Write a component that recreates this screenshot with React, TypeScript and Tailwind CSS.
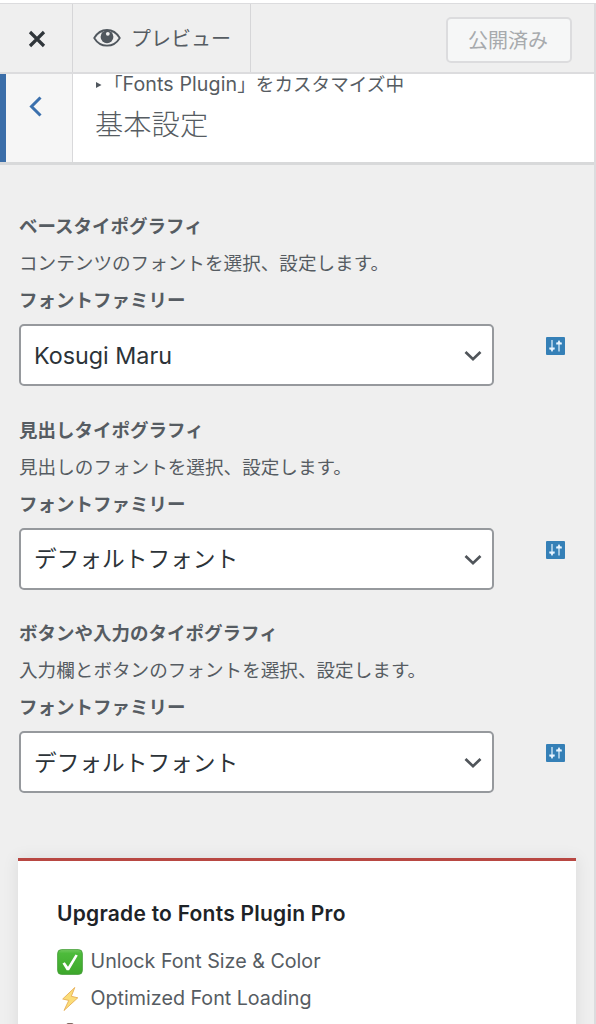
import type { ReactNode } from 'react';

type TypographyControl = {
  title: string;
  description: string;
  value: string;
  latin?: boolean;
};

const controls: TypographyControl[] = [
  {
    title: 'ベースタイポグラフィ',
    description: 'コンテンツのフォントを選択、設定します。',
    value: 'Kosugi Maru',
    latin: true,
  },
  {
    title: '見出しタイポグラフィ',
    description: '見出しのフォントを選択、設定します。',
    value: 'デフォルトフォント',
  },
  {
    title: 'ボタンや入力のタイポグラフィ',
    description: '入力欄とボタンのフォントを選択、設定します。',
    value: 'デフォルトフォント',
  },
];

function EyeIcon() {
  return (
    <svg width="28" height="20" viewBox="0 0 28 20" fill="none">
      <path d="M1.200 10C4.200 5 8.600 2 14 2s9.800 3 12.800 8c-3 5-7.400 7.700-12.800 7.700S4.200 15 1.200 10Z" stroke="#50575e" strokeWidth="1.800" strokeLinejoin="round" />
      <circle cx="14" cy="8.800" r="6.400" fill="#50575e" />
      <circle cx="14.800" cy="5.800" r="1.900" fill="#efefef" />
    </svg>
  );
}

function SlidersIcon() {
  return (
    <svg width="19" height="18" viewBox="0 0 19 18" fill="none" className="block">
      <rect width="19" height="18" rx="1" fill="#3580b7" />
      <path d="M6 3v11.500M13 3.500V14.500" stroke="#d8eaf7" strokeWidth="1.300" />
      <path d="M3.300 11.500h5.400M10.200 6.500h5.600" stroke="#e8f4ff" strokeWidth="1.900" />
      <path d="M4.300 12h3.400L6 14.600ZM11.300 6h3.400L13 3.400Z" fill="#e8f4ff" />
    </svg>
  );
}

function CheckIcon() {
  return (
    <svg width="26" height="26" viewBox="0 0 26 26" fill="none">
      <defs>
        <linearGradient id="check-fill" x1="0" y1="0" x2="0" y2="1">
          <stop offset="0" stopColor="#72ca60" />
          <stop offset="0.150" stopColor="#4dbb3b" />
          <stop offset="1" stopColor="#3da72b" />
        </linearGradient>
      </defs>
      <rect x="0.600" y="0.600" width="24.800" height="24.800" rx="4" fill="url(#check-fill)" stroke="#439b37" strokeWidth="0.800" />
      <path d="m5.500 14.500 2.300-1.300 3.200 4.500L18.500 5.500l2.300 1.100-8.700 14.600h-2.400Z" fill="#fff" />
    </svg>
  );
}

function BoltIcon() {
  return (
    <svg width="26" height="26" viewBox="0 0 26 26" fill="none">
      <path d="M17.800 1.500 5.700 13l6.100 1.400L7 24.500 20.800 11.800l-6.500-1.500Z" fill="#fbdd78" stroke="#e6ae55" strokeWidth="0.900" strokeLinejoin="round" />
    </svg>
  );
}

// Only the tip of this row shows above the fold
function BrushIcon() {
  return (
    <svg width="26" height="26" viewBox="0 0 26 26" fill="none">
      <path d="M8 4c1-6 9-6 10 0l1 8H7Z" fill="#806a62" />
    </svg>
  );
}

function FeatureRow({ icon, children }: { icon: ReactNode; children?: ReactNode }) {
  return (
    <li className="flex h-[37px] items-center gap-[7.5px]">
      {icon}
      <span>{children}</span>
    </li>
  );
}

function FontControl({ title, description, value, latin }: TypographyControl) {
  return (
    <section className="h-[203.5px]">
      <h3 className="text-[18.5px] leading-[37px] font-bold">{title}</h3>
      <p className="text-[18.6px] leading-[37px]">{description}</p>
      <p className="text-[18.5px] leading-[37px] font-bold">フォントファミリー</p>
      <div className="mt-[5px] flex items-start">
        <button className="flex h-[62px] w-[475px] items-center justify-between rounded-[5px] border-2 border-[#96999d] bg-white pr-[10px] pl-[13px] text-[#2c3338]">
          <span className={latin ? 'pt-[2px] text-[23.3px]' : 'pt-[2px] text-[22.7px]'}>{value}</span>
          <svg width="18" height="12" viewBox="0 0 18 12" fill="none" className="mt-[2px]">
            <path d="m1.500 2 7.500 7.200L16.500 2" stroke="#50555a" strokeWidth="2.700" />
          </svg>
        </button>
        <button className="mt-[13px] ml-[52px]" aria-label="フォント詳細設定">
          <SlidersIcon />
        </button>
      </div>
    </section>
  );
}

export default function App() {
  return (
    <div className="h-[1024px] w-[596px] overflow-hidden bg-white pt-[3px] font-['Inter','Noto_Sans_CJK_JP',sans-serif] text-[#565c62]">
      <div className="h-[1021px] w-[596px] overflow-hidden border-t border-r-2 border-[#dcdcde] bg-[#efefef]">
        <header className="flex h-[70px] border-b-2 border-[#dcdcde]">
          <button className="flex w-[73px] items-center justify-center border-r border-[#d6d6d8] pl-[2px]" aria-label="閉じる">
            <svg width="18" height="18" viewBox="0 0 18 18" fill="none" className="mt-[2px]">
              <path d="m2 2 14 14M16 2 2 16" stroke="#30363b" strokeWidth="3.200" />
            </svg>
          </button>
          <button className="flex w-[178px] items-center gap-[10px] border-r border-[#d6d6d8] pl-[20px]">
            <EyeIcon />
            <span className="pt-[2px] text-[20px] leading-[30px]">プレビュー</span>
          </button>
          <button className="mt-[13px] mr-[22px] ml-auto h-[46px] w-[126px] rounded-[5px] border-2 border-[#dcdcde] bg-[#f6f7f7] pt-[2px] pr-[2px] text-[20px] text-[#a7aaad]">
            公開済み
          </button>
        </header>

        <div className="flex h-[91px] border-b-3 border-[#d8d9da] bg-white">
          <button className="flex w-[73px] justify-center border-r border-l-6 border-r-[#d9d9db] border-l-[#3b6ea9] bg-[#f6f6f6] pt-[22px] pr-[8px]" aria-label="戻る">
            <svg width="13" height="21" viewBox="0 0 13 21" fill="none">
              <path d="m11.500 1.500-9 9 9 9" stroke="#3b70ad" strokeWidth="3" />
            </svg>
          </button>
          <div className="pl-[22px]">
            <p className="flex h-[20px] items-center text-[18.6px] leading-[20px]">
              <svg width="8" height="8" viewBox="0 0 8 8" className="mt-[2px] mr-[1px]">
                <path d="M1 1v6l5.500-3Z" fill="#50575e" />
              </svg>
              <span>
                「<span className="text-[19.6px] tracking-[0.1px]">Fonts Plugin</span>」をカスタマイズ中
              </span>
            </p>
            <h1 className="mt-[11px] text-[28.3px] leading-[40px] font-extralight">基本設定</h1>
          </div>
        </div>

        <main className="pt-[43px] pl-[19px]">
          {controls.map((control) => (
            <FontControl key={control.title} {...control} />
          ))}

          <aside className="mt-[39.500px] ml-[-1px] h-[240px] w-[558px] border-t-3 border-[#b84742] bg-white px-[39px] pt-[35px] shadow-[0_1px_15px_1px_rgba(0,0,0,0.08)]">
            <h2 className="pt-[1px] text-[21px] leading-[34px] font-semibold tracking-[0.24px] text-[#1d2327]">Upgrade to Fonts Plugin Pro</h2>
            <ul className="mt-[12px] text-[19.700px]">
              <FeatureRow icon={<CheckIcon />}>Unlock Font Size &amp; Color</FeatureRow>
              <FeatureRow icon={<BoltIcon />}>Optimized Font Loading</FeatureRow>
              <FeatureRow icon={<BrushIcon />} />
            </ul>
          </aside>
        </main>
      </div>
    </div>
  );
}
